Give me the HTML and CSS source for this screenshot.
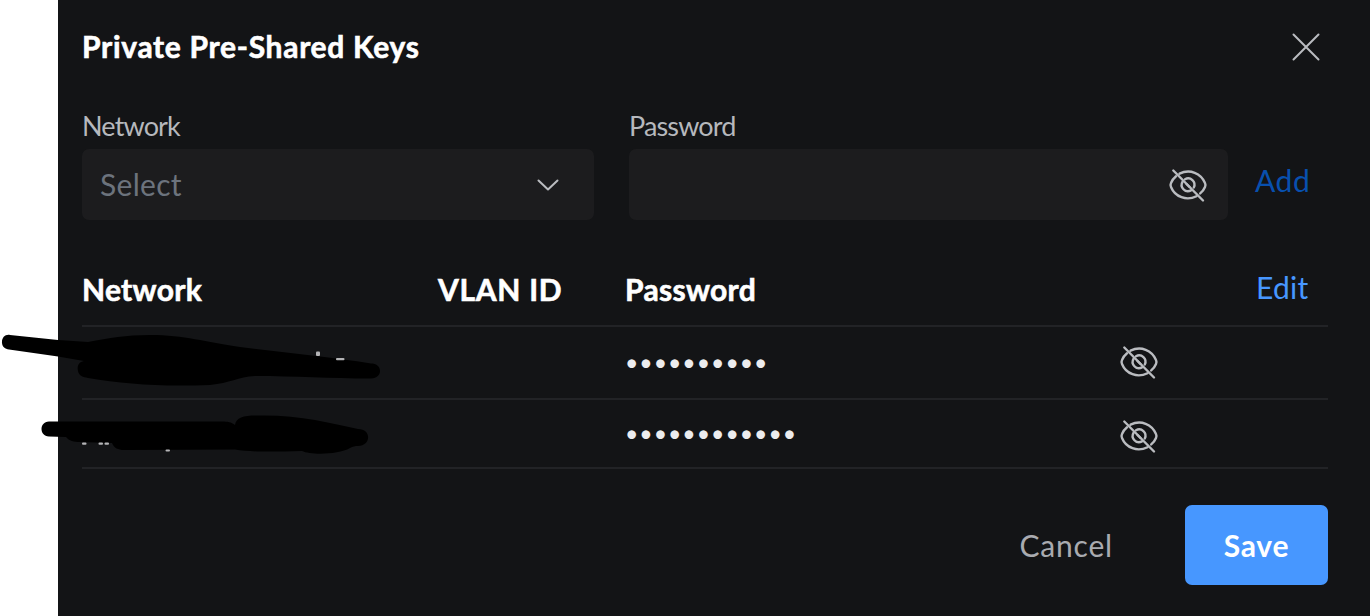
FILE: index.html
```html
<!DOCTYPE html>
<html lang="en">
<head>
    <meta charset="UTF-8">
    <meta name="viewport" content="width=device-width, initial-scale=1.0">
    <title>Private Pre-Shared Keys</title>
    <link rel="stylesheet" href="styles.css">
</head>
<body>
    <svg class="icon-defs" width="0" height="0">
        <symbol id="eye-off" viewBox="0 0 40 36">
            <path d="M11.500 6.700 C22 1.500 33 6.500 37 16 C37.700 17.500 37.700 18.500 37 20 C36 22.500 34.500 24.500 32.200 26.400"/>
            <path d="M8 9.200 C5.800 11 4 13.500 3 16 C2.300 17.500 2.300 18.500 3 20 C7 30 18.500 34.200 28.500 29.200"/>
            <path d="M17 12.300 A6.300 6.300 0 0 1 25.800 20.500"/>
            <path d="M14.600 14.600 A6.300 6.300 0 0 0 23 23.400"/>
            <path d="M18.500 17 L21.500 20"/>
            <path d="M5.300 3.500 L35 33.500"/>
        </symbol>
    </svg>

    <div class="panel">
        <header class="panel-header">
            <h1>Private Pre-Shared Keys</h1>
            <svg class="close" viewBox="0 0 28 28"><path d="M1.500 1.500 L26.500 26.500 M26.500 1.500 L1.500 26.500"/></svg>
        </header>

        <div class="form">
            <div class="field network-field">
                <label>Network</label>
                <div class="input">
                    <span class="placeholder">Select</span>
                    <svg class="chevron" viewBox="0 0 22 12"><path d="M1.500 1.500 L11 10.500 L20.500 1.500"/></svg>
                </div>
            </div>
            <div class="field password-field">
                <label>Password</label>
                <div class="input">
                    <svg class="eye"><use href="#eye-off"/></svg>
                </div>
            </div>
            <a class="add">Add</a>
        </div>

        <div class="keys">
            <div class="row head">
                <span class="head-network">Network</span>
                <span class="head-vlan">VLAN ID</span>
                <span class="head-password">Password</span>
                <a class="edit">Edit</a>
            </div>
            <div class="row first">
                <span></span>
                <span></span>
                <span class="dots">••••••••••</span>
                <svg class="eye"><use href="#eye-off"/></svg>
            </div>
            <div class="row second">
                <span></span>
                <span></span>
                <span class="dots">••••••••••••</span>
                <svg class="eye"><use href="#eye-off"/></svg>
            </div>
        </div>

        <footer class="actions">
            <button class="cancel">Cancel</button>
            <button class="save">Save</button>
        </footer>
    </div>

    <!-- marker strokes over the network names -->
    <svg class="scribble" viewBox="0 0 400 150">
        <path d="M10 15 C5 14 1.500 18 2 23 C2.500 27 5 29 9 29.500 L58 36.500 L84 41 C78 42 77 47 78 51 C79 56 83 57 88 58 C125 64 160 67 210 65 C230 63 238 57 255 56 C295 56 330 58.500 371 58.500 C377 58 380 55 380 51 C380 46 376 43.500 371 43.500 C330 37 285 33 240 27 C205 22 185 15 150 15 C125 15 110 18 88 22 L58 20 Z"/>
        <path d="M49 101.500 C39 102 39 116 49 116.500 L66 117 C69 121 74 122 80 122 L112 123 C114 128 118 130 124 130 L235 129.500 C250 132 270 132 302 131 C310 135 338 135 350 128 C353 126.500 355 126 358 126 C371 126 372 109 358 109 C330 103 300 95 260 95.500 C245 95 236 97 235 105 C231 102 228 101.500 222 101.500 Z"/>
        <g class="specks">
            <rect x="316" y="31.500" width="4" height="4.500" rx="1"/>
            <rect x="336" y="38" width="8.500" height="2.200" rx="1"/>
            <rect x="82" y="122.500" width="4.500" height="2.300" rx="1"/>
            <rect x="98.500" y="122.500" width="4.500" height="2.300" rx="1"/>
            <rect x="104.500" y="122.500" width="4.500" height="2.300" rx="1"/>
            <rect x="165.500" y="129.500" width="4.500" height="2" rx="1"/>
        </g>
    </svg>
</body>
</html>
```

FILE: styles.css
```css
* {
    box-sizing: border-box;
}

body {
    margin: 0;
    height: 616px;
    overflow: hidden;
    position: relative;
    background-color: #fff;
    font-family: Lato, "Open Sans", sans-serif;
    font-size: 30px;
    line-height: 36px;
    color: #fff;
}

svg {
    display: block;
    fill: none;
    stroke: #babcc0;
    stroke-width: 2;
    stroke-linecap: round;
    stroke-linejoin: round;
}

.icon-defs {
    position: absolute;
}

.panel {
    margin-left: 58px;
    height: 616px;
    padding: 28px 42px 0 24px;
    background-color: #131416;
}

.panel-header {
    display: flex;
    justify-content: space-between;
    height: 84px;
}

h1 {
    margin: 0;
    font-size: 30px;
    line-height: 37px;
    font-weight: bold;
    letter-spacing: 0.7px;
    -webkit-text-stroke: 0.6px #fff;
}

.close {
    width: 28px;
    height: 28px;
    margin: 5px 8.5px 0 0;
}

.form {
    display: flex;
    height: 108px;
}

.field label {
    display: block;
    height: 37px;
    font-size: 27px;
    line-height: 28px;
    letter-spacing: -0.85px;
    color: #b6b8bd;
}

.network-field {
    width: 512px;
    margin-right: 35px;
}

.password-field {
    width: 599px;
    margin-right: 27px;
}

.input {
    display: flex;
    align-items: center;
    height: 71px;
    padding: 0 20px 0 18px;
    border-radius: 7px;
    background-color: #1c1c1e;
}

.placeholder {
    padding-bottom: 2px;
    letter-spacing: 0.3px;
    color: #6c737d;
}

.chevron {
    width: 22px;
    height: 12px;
    margin: 0 15px 0 auto;
}

.eye {
    width: 40px;
    height: 36px;
    stroke-width: 2.4;
}

.input .eye {
    margin-left: auto;
}

.add {
    margin-top: 50px;
    letter-spacing: 0.6px;
    color: #0850ae;
}

.keys {
    margin-top: 33px;
}

.row {
    display: grid;
    grid-template-columns: 356px 187px 494px 137px 1fr;
    align-items: center;
    border-bottom: 2px solid #222326;
}

.head {
    height: 74px;
    font-weight: bold;
    letter-spacing: 0.3px;
}

.head span {
    -webkit-text-stroke: 0.6px #fff;
}

.head-vlan {
    letter-spacing: 0.7px;
}

.edit {
    grid-column: 5;
    padding-bottom: 4px;
    font-weight: normal;
    color: #4797ff;
}

.first {
    height: 73px;
}

.first .eye {
    margin-bottom: 1px;
}

.second {
    height: 69px;
}

.second .eye {
    margin-top: 5px;
}

.dots {
    padding-bottom: 1px;
    font-size: 23px;
    letter-spacing: 1px;
    color: #ececee;
}

.actions {
    display: flex;
    justify-content: flex-end;
    margin-top: 36px;
}

button {
    border: 0;
    padding: 0 0 1px;
    height: 80px;
    font: inherit;
    background: none;
}

.cancel {
    margin-right: 72px;
    letter-spacing: 0.8px;
    color: #a9abb0;
}

.save {
    width: 143px;
    border-radius: 7px;
    background-color: #4797ff;
    color: #fff;
    font-weight: bold;
    letter-spacing: 0.8px;
}

.scribble {
    position: absolute;
    left: 0;
    top: 320px;
    width: 400px;
    height: 150px;
    fill: #000;
    stroke: none;
}

.specks {
    fill: #b4b4b6;
}
```
